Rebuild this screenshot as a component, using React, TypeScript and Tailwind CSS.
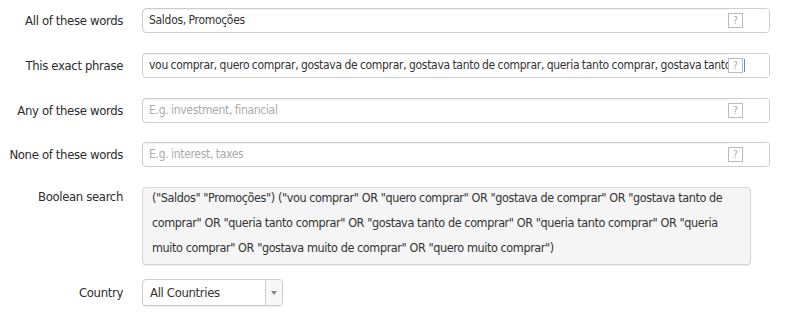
import React from "react";

const font = "font-['DejaVu_Sans',sans-serif] font-stretch-condensed";

function Help({ caret }: { caret?: boolean }) {
  return (
    <div className="flex items-center bg-white shrink-0 w-[41px]">
      <div className="w-[15px] h-[15px] border border-[#bbb] text-[#aaa] text-[10px] leading-[13px] text-center">?</div>
      {caret && <div className="w-px h-[13px] bg-[#4a90d9] ml-[1px]" />}
    </div>
  );
}

function Field({ value, placeholder, caret }: { value?: string; placeholder?: string; caret?: boolean }) {
  return (
    <div className="flex w-[628px] h-[25px] border border-[#ccc] rounded-[4px] bg-white shadow-[inset_0_1px_1px_rgba(0,0,0,0.06)] overflow-hidden">
      <div
        className={`flex-1 min-w-0 pl-[6px] leading-[23px] text-[12px] tracking-[-0.3px] [word-spacing:-0.5px] whitespace-nowrap overflow-hidden ${
          value ? "text-[#333]" : "text-[#aaa]"
        }`}
      >
        {value ?? placeholder}
      </div>
      <Help caret={caret} />
    </div>
  );
}

function Row({ label, children, top }: { label: string; children: React.ReactNode; top?: boolean }) {
  return (
    <div className={`flex ${top ? "items-start" : "items-center"} gap-[19px]`}>
      <div className="w-[123px] shrink-0 whitespace-nowrap text-right text-[13px] tracking-[-0.35px] text-[#2d2d2d]">
        {label}
      </div>
      {children}
    </div>
  );
}

export default function App() {
  return (
    <div className={`${font} w-[800px] h-[316px] bg-white pt-[8px] flex flex-col`}>
      <Row label="All of these words">
        <Field value="Saldos, Promoções" />
      </Row>
      <div className="h-[20px]" />
      <Row label="This exact phrase">
        <Field
          caret
          value="vou comprar, quero comprar, gostava de comprar, gostava tanto de comprar, queria tanto comprar, gostava tanto de comprar, queria tanto comprar"
        />
      </Row>
      <div className="h-[20px]" />
      <Row label="Any of these words">
        <Field placeholder="E.g. investment, financial" />
      </Row>
      <div className="h-[19px]" />
      <Row label="None of these words">
        <Field placeholder="E.g. interest, taxes" />
      </Row>
      <div className="h-[20px]" />
      <Row label="Boolean search" top>
        <div className="w-[609px] h-[78px] border border-[#d5d5d5] rounded-[4px] bg-[#f5f5f5] shadow-[0_1px_1px_rgba(0,0,0,0.08)] px-[9px] text-[12.5px] tracking-[-0.4px] leading-[25px] text-[#333] whitespace-nowrap overflow-hidden">
          <div className="-mt-[3px]">
            ("Saldos" "Promoções") ("vou comprar" OR "quero comprar" OR "gostava de comprar" OR "gostava tanto de
            <br />
            comprar" OR "queria tanto comprar" OR "gostava tanto de comprar" OR "queria tanto comprar" OR "queria
            <br />
            muito comprar" OR "gostava muito de comprar" OR "quero muito comprar")
          </div>
        </div>
      </Row>
      <div className="h-[14px]" />
      <Row label="Country">
        <div className="w-[141px] h-[27px] border border-[#ccc] rounded-[4px] bg-white shadow-[0_1px_1px_rgba(0,0,0,0.08)] flex overflow-hidden">
          <div className="flex-1 pl-[7px] leading-[25px] text-[13px] tracking-[-0.35px] text-[#333]">All Countries</div>
          <div className="w-[17px] border-l border-[#ccc] bg-[#f7f7f7] flex items-center justify-center">
            <div className="w-0 h-0 border-l-[3px] border-r-[3px] border-t-[4px] border-l-transparent border-r-transparent border-t-[#888]" />
          </div>
        </div>
      </Row>
    </div>
  );
}
